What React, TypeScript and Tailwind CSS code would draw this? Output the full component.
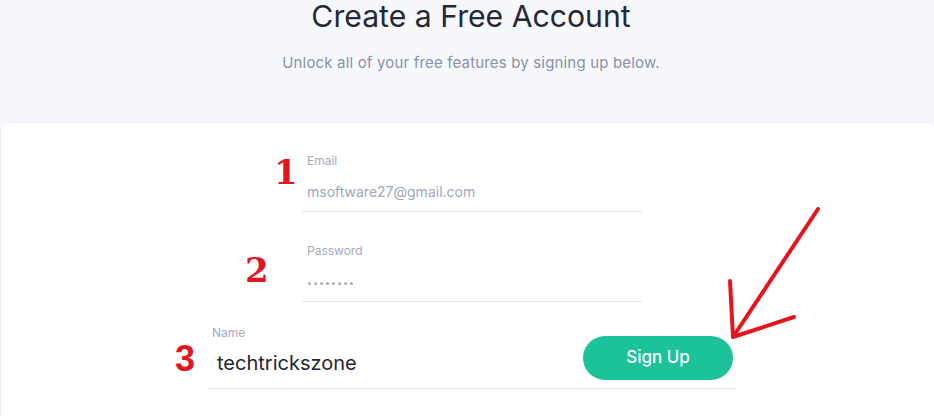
import React from "react";

export default function App() {
  return (
    <div
      className="relative h-[416px] w-[934px] overflow-hidden bg-[#f7f8fc]"
      style={{ fontFamily: "Inter, 'Noto Sans', sans-serif" }}
    >
      <div className="flex flex-col items-center pl-[8px]">
        <h1 className="mt-[-2px] text-[30.2px] leading-[36px] font-normal text-[#252836]">
          Create a Free Account
        </h1>
        <p className="mt-[19px] text-[15px] leading-[20px] tracking-[0.17px] text-[#8a90a8]">
          Unlock all of your free features by signing up below.
        </p>
      </div>

      <div className="mt-[50px] ml-[2px] h-[400px] rounded-md bg-white shadow-[0_0_6px_rgba(30,40,80,0.06)] pt-[30px]">
        <div className="ml-[300px] w-[340px]">
          <div className="border-b border-[#e3e5eb] pb-[9px]">
            <div className="pl-[5px] text-[12px] leading-[16px] text-[#a4a9bd]">Email</div>
            <div className="mt-[13px] pl-[5px] text-[14px] leading-[20px] text-[#a1a6ba]">
              msoftware27@gmail.com
            </div>
          </div>
          <div className="mt-[31px] border-b border-[#e3e5eb] pb-[9px]">
            <div className="pl-[5px] text-[12px] leading-[16px] text-[#a4a9bd]">Password</div>
            <div className="mt-[13px] flex h-[20px] items-center gap-[3px] pl-[6px] pt-[2px]">
              {[0, 1, 2, 3, 4, 5, 6, 7].map((i) => (
                <span key={i} className="h-[3px] w-[3px] rounded-full bg-[#a7abbe]" />
              ))}
            </div>
          </div>
        </div>

        <div className="mt-[23px] ml-[205px] flex w-[530px] items-end justify-between border-b border-[#e3e5eb] pb-[8px]">
          <div className="pb-[3px]">
            <div className="pl-[5px] text-[12px] leading-[16px] text-[#a4a9bd]">Name</div>
            <div className="mt-[8px] pl-[10px] text-[20px] leading-[28px] text-[#23252f]">
              techtrickszone
            </div>
          </div>
          <button className="mr-[4px] h-[44px] w-[150px] rounded-full bg-[#1cc39a] text-[17px] font-medium text-white">
            Sign Up
          </button>
        </div>
      </div>

      {/* annotations */}
      <span
        className="absolute left-[274px] top-[152px] text-[34px] leading-[40px] font-bold text-[#e2161f]"
        style={{ fontFamily: "'DejaVu Serif', serif" }}
      >
        1
      </span>
      <span
        className="absolute left-[245px] top-[250px] text-[34px] leading-[40px] font-bold text-[#e2161f]"
        style={{ fontFamily: "'DejaVu Serif', serif" }}
      >
        2
      </span>
      <span
        className="absolute left-[175px] top-[339px] text-[36px] leading-[40px] font-bold text-[#e2161f]"
        style={{ fontFamily: "'Liberation Sans', Arial, sans-serif" }}
      >
        3
      </span>
      <svg
        className="absolute left-0 top-0"
        width="934"
        height="416"
        viewBox="0 0 934 416"
        fill="none"
      >
        <path
          d="M818 209 L733 337 M730 281 L733 337 L794 317"
          stroke="#e3161f"
          strokeWidth="4"
          strokeLinecap="round"
          strokeLinejoin="round"
        />
      </svg>
    </div>
  );
}
